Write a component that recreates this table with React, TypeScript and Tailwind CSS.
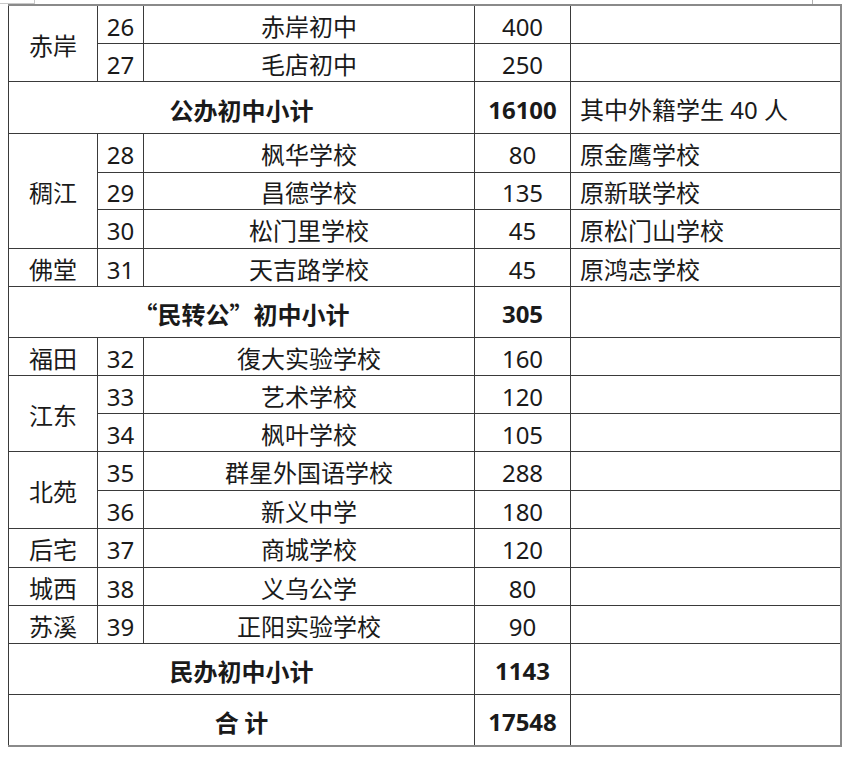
import * as React from "react";

type Row =
  | { kind: "item"; h: string; area?: string; span?: number; no: number; name: string; count: string; note?: string }
  | { kind: "sum"; h: string; label: string; count: string; note?: string };

const rows: Row[] = [
  { kind: "item", h: "h-[38px]", area: "赤岸", span: 2, no: 26, name: "赤岸初中", count: "400" },
  { kind: "item", h: "h-[38px]", no: 27, name: "毛店初中", count: "250" },
  { kind: "sum", h: "h-[52px]", label: "公办初中小计", count: "16100", note: "其中外籍学生 40 人" },
  { kind: "item", h: "h-[39px]", area: "稠江", span: 3, no: 28, name: "枫华学校", count: "80", note: "原金鹰学校" },
  { kind: "item", h: "h-[37px]", no: 29, name: "昌德学校", count: "135", note: "原新联学校" },
  { kind: "item", h: "h-[39px]", no: 30, name: "松门里学校", count: "45", note: "原松门山学校" },
  { kind: "item", h: "h-[38px]", area: "佛堂", span: 1, no: 31, name: "天吉路学校", count: "45", note: "原鸿志学校" },
  { kind: "sum", h: "h-[51px]", label: "“民转公”初中小计", count: "305" },
  { kind: "item", h: "h-[38px]", area: "福田", span: 1, no: 32, name: "復大实验学校", count: "160" },
  { kind: "item", h: "h-[38px]", area: "江东", span: 2, no: 33, name: "艺术学校", count: "120" },
  { kind: "item", h: "h-[38px]", no: 34, name: "枫叶学校", count: "105" },
  { kind: "item", h: "h-[39px]", area: "北苑", span: 2, no: 35, name: "群星外国语学校", count: "288" },
  { kind: "item", h: "h-[38px]", no: 36, name: "新义中学", count: "180" },
  { kind: "item", h: "h-[39px]", area: "后宅", span: 1, no: 37, name: "商城学校", count: "120" },
  { kind: "item", h: "h-[38px]", area: "城西", span: 1, no: 38, name: "义乌公学", count: "80" },
  { kind: "item", h: "h-[38px]", area: "苏溪", span: 1, no: 39, name: "正阳实验学校", count: "90" },
  { kind: "sum", h: "h-[51px]", label: "民办初中小计", count: "1143" },
  { kind: "sum", h: "h-[52px]", label: "合 计", count: "17548" },
];

const cell = "border border-[#3a3a3a] p-0 pt-[5px] align-middle leading-[28px]";

export default function App() {
  return (
    <div
      className="relative h-[757px] w-[849px] bg-white text-[24px] text-[#1a1a1a]"
      style={{ fontFamily: '"Noto Sans", "Noto Sans CJK SC", sans-serif' }}
    >
      <div className="absolute left-0 top-0 h-[4px] w-[35px] border-b border-r border-[#c8c8c8]" />
      <div className="absolute right-[35px] top-0 h-[4px] w-[2px] border-l border-[#b0b0b0]" />
      <div className="pl-[8px] pt-[4px]">
        <table className="w-[833px] table-fixed border-collapse border-t-2 border-r-2 border-b-2 border-l border-[#8a8a8a]">
          <colgroup>
            <col className="w-[89px]" />
            <col className="w-[46px]" />
            <col className="w-[331px]" />
            <col className="w-[96px]" />
            <col className="w-[270px]" />
          </colgroup>
          <tbody>
            {rows.map((r, i) =>
              r.kind === "item" ? (
                <tr key={i} className={r.h}>
                  {r.area && (
                    <td rowSpan={r.span} className={`${cell} text-center`}>
                      {r.area}
                    </td>
                  )}
                  <td className={`${cell} text-center`}>{r.no}</td>
                  <td className={`${cell} text-center`}>{r.name}</td>
                  <td className={`${cell} text-center`}>{r.count}</td>
                  <td className={`${cell} pl-[9px] text-left`}>{r.note}</td>
                </tr>
              ) : (
                <tr key={i} className={r.h}>
                  <td
                    colSpan={3}
                    className={`${cell} text-center font-bold`}
                    style={{ fontFamily: '"Noto Sans CJK SC", sans-serif' }}
                  >
                    {r.label}
                  </td>
                  <td className={`${cell} text-center font-bold`}>{r.count}</td>
                  <td className={`${cell} pl-[9px] text-left`}>{r.note}</td>
                </tr>
              )
            )}
          </tbody>
        </table>
      </div>
    </div>
  );
}
